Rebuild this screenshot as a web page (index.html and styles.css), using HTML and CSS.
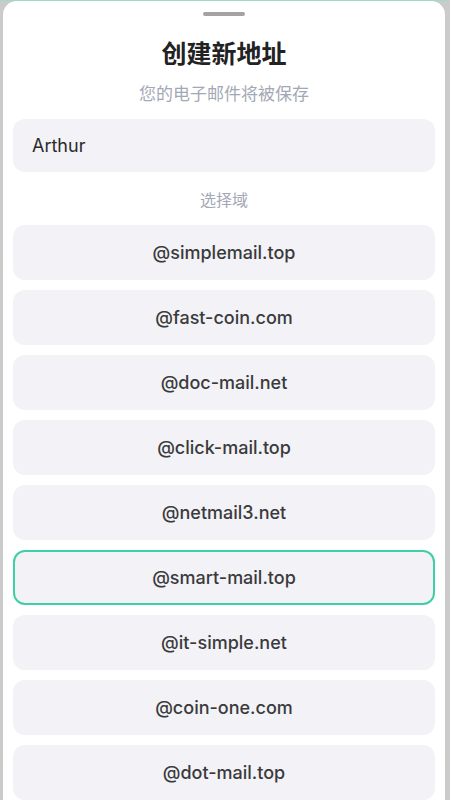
FILE: index.html
```html
<!DOCTYPE html>
<html lang="zh">
<head>
<meta charset="utf-8">
<link rel="stylesheet" href="styles.css">
</head>
<body>
<div class="sheet">
  <div class="handle"></div>
  <h1 class="title">创建新地址</h1>
  <p class="subtitle">您的电子邮件将被保存</p>
  <div class="input">Arthur</div>
  <p class="label">选择域</p>
  <ul class="domains">
    <li class="domain">@simplemail.top</li>
    <li class="domain">@fast-coin.com</li>
    <li class="domain">@doc-mail.net</li>
    <li class="domain">@click-mail.top</li>
    <li class="domain">@netmail3.net</li>
    <li class="domain selected">@smart-mail.top</li>
    <li class="domain">@it-simple.net</li>
    <li class="domain">@coin-one.com</li>
    <li class="domain">@dot-mail.top</li>
  </ul>
</div>
</body>
</html>
```
FILE: styles.css
```css
html, body {
  margin: 0;
  padding: 0;
}
body {
  width: 450px;
  height: 800px;
  overflow: hidden;
  background: #cbcbcb;
  border-top: 1px solid #9fd9c7;
  box-sizing: border-box;
  font-family: Inter, "Noto Sans CJK SC", sans-serif;
}
.sheet {
  margin: 0 5px 0 3px;
  height: 799px;
  background: #ffffff;
  border-radius: 14px 14px 0 0;
  padding: 0 10px;
  box-sizing: border-box;
  display: flex;
  flex-direction: column;
  overflow: hidden;
}
.handle {
  align-self: center;
  width: 42px;
  height: 4px;
  border-radius: 2px;
  background: #a3a3a3;
  margin-top: 11px;
}
.title {
  margin: 20px 0 0;
  font-size: 25px;
  line-height: 32px;
  font-weight: 700;
  color: #222222;
  text-align: center;
  font-family: "Noto Sans CJK SC", sans-serif;
}
.subtitle {
  margin: 15px 0 0;
  font-size: 17px;
  line-height: 20px;
  color: #a3a8b6;
  text-align: center;
  font-family: "Noto Sans CJK SC", sans-serif;
}
.input {
  margin-top: 16px;
  height: 55px;
  border-radius: 12px;
  background: #f2f2f7;
  padding-left: 19px;
  display: flex;
  align-items: center;
  font-size: 18px;
  color: #2a2a2a;
}
.label {
  margin: 17px 0 0;
  font-size: 16px;
  line-height: 20px;
  color: #a3a8b6;
  text-align: center;
  font-family: "Noto Sans CJK SC", sans-serif;
}
.domains {
  list-style: none;
  margin: 16px 0 0;
  padding: 0;
  display: flex;
  flex-direction: column;
  gap: 10px;
}
.domain {
  height: 55px;
  flex-shrink: 0;
  border-radius: 12px;
  background: #f2f2f7;
  display: flex;
  align-items: center;
  justify-content: center;
  font-size: 18px;
  font-weight: 500;
  color: #3a3a3c;
  box-sizing: border-box;
}
.domain.selected {
  border: 2px solid #3fcfa7;
}
```
